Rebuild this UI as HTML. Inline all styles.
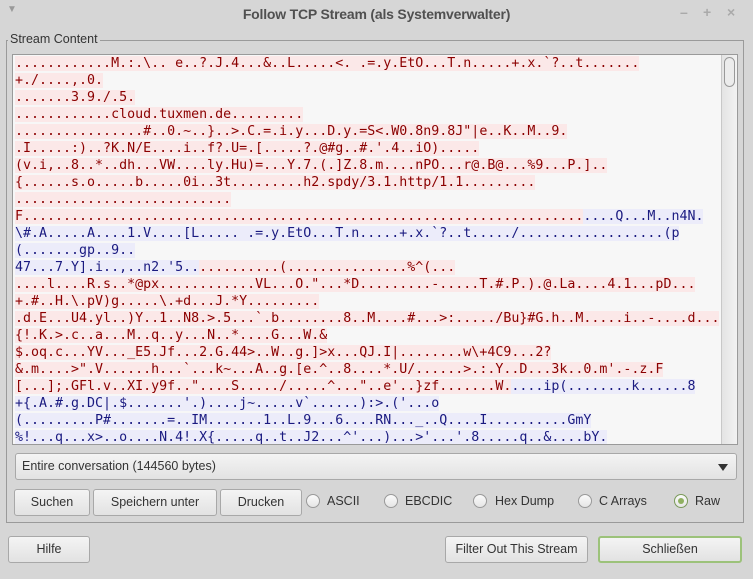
<!DOCTYPE html>
<html><head><meta charset="utf-8">
<style>
*{box-sizing:border-box;margin:0;padding:0}
body{width:753px;height:579px;overflow:hidden;background:#d6d6d6;font-family:"Liberation Sans",sans-serif;font-size:12.5px;color:#333;position:relative}
.title{position:absolute;left:0;top:0;width:753px;height:28px;text-align:center;line-height:28px;font-size:14px;font-weight:bold;color:#505050;letter-spacing:-0.2px}
.tl{position:absolute;left:7px;top:4px;color:#999;font-size:10px}
.tr{position:absolute;top:4px;color:#aaa;font-size:14px;font-weight:bold}
.frame{position:absolute;left:6px;top:40px;width:738px;height:483px;border:1px solid #9a9a9a}
.flabel{position:absolute;left:8px;top:32px;background:#d6d6d6;padding:0 2px;font-size:12.5px;color:#333}
.tbox{position:absolute;left:12px;top:54px;width:726px;height:391px;border:1px solid #9a9a9a;background:#f7f7f7;overflow:hidden}
.txt{position:absolute;left:2px;top:0px;font-family:"DejaVu Sans Mono",monospace;font-size:13.3px;line-height:17px;white-space:pre}
.c{color:#8b0000;background:#fbe8e8}
.s{color:#1a1a80;background:#ececfa}
.sb{position:absolute;right:0;top:0;width:16px;height:389px;background:linear-gradient(90deg,#e4e4e4,#f2f2f2);border-left:1px solid #c8c8c8}
.thumb{position:absolute;left:2px;top:2px;width:11px;height:30px;border:1px solid #999;border-radius:6px;background:#ececec}
.btn{position:absolute;height:27px;border:1px solid #a8a8a8;border-radius:3px;background:linear-gradient(#f4f4f4,#e2e2e2);text-align:center;line-height:25px;font-size:12.5px;color:#333}
.combo{position:absolute;left:15px;top:453px;width:722px;height:27px;border:1px solid #a8a8a8;border-radius:3px;background:linear-gradient(#f4f4f4,#e2e2e2);line-height:25px;padding-left:6px}
.arrow{position:absolute;right:8px;top:10px;width:0;height:0;border-left:5px solid transparent;border-right:5px solid transparent;border-top:7px solid #333}
.rad{position:absolute;top:494px;width:14px;height:14px;border:1px solid #999;border-radius:50%;background:linear-gradient(#fafafa,#e6e6e6)}
.rl{position:absolute;top:494px;line-height:15px;font-size:12.5px}
</style></head><body>
<div class="title">Follow TCP Stream (als Systemverwalter)</div>
<div class="tl">▼</div>
<div class="tr" style="left:680px">–</div><div class="tr" style="left:703px">+</div><div class="tr" style="left:727px">×</div>
<div class="frame"></div>
<div class="flabel">Stream Content</div>
<div class="tbox">
<div class="txt"><span class="c">............M.:.\.. e..?.J.4...&amp;..L.....&lt;. .=.y.EtO...T.n.....+.x.`?..t.......</span>
<span class="c">+./....,.0.</span>
<span class="c">.......3.9./.5.</span>
<span class="c">............cloud.tuxmen.de.........</span>
<span class="c">................#..0.~..}..&gt;.C.=.i.y...D.y.=S&lt;.W0.8n9.8J"|e..K..M..9.</span>
<span class="c">.I.....:)..?K.N/E....i..f?.U=.[.....?.@#g..#.'.4..iO).....</span>
<span class="c">(v.i,..8..*..dh...VW....ly.Hu)=...Y.7.(.]Z.8.m....nPO...r@.B@...%9...P.]..</span>
<span class="c">{......s.o.....b.....0i..3t.........h2.spdy/3.1.http/1.1.........</span>
<span class="c">...........................</span>
<span class="c">F......................................................................</span><span class="s">....Q...M..n4N.</span>
<span class="s">\#.A.....A....1.V....[L..... .=.y.EtO...T.n.....+.x.`?..t...../..................(p</span>
<span class="s">(.......gp..9..</span>
<span class="s">47...7.Y].i..,..n2.'5..</span><span class="c">..........(...............%^(...</span>
<span class="c">....l....R.s..*@px............VL...O."...*D.........-.....T.#.P.).@.La....4.1...pD...</span>
<span class="c">+.#..H.\.pV)g.....\.+d...J.*Y.........</span>
<span class="c">.d.E...U4.yl..)Y..1..N8.&gt;.5...`.b........8..M....#...&gt;:...../Bu}#G.h..M.....i..-....d...</span>
<span class="c">{!.K.&gt;.c..a...M..q..y...N..*....G...W.&amp;</span>
<span class="c">$.oq.c...YV..._E5.Jf...2.G.44&gt;..W..g.]&gt;x...QJ.I|........w\+4C9...2?</span>
<span class="c">&amp;.m....&gt;".V......h...`...k~...A..g.[e.^..8....*.U/......&gt;.:.Y..D...3k..0.m'.-.z.F</span>
<span class="c">[...];.GFl.v..XI.y9f.."....S...../.....^..."..e'..}zf.......W.</span><span class="s">....ip(........k......8</span>
<span class="s">+{.A.#.g.DC|.$.......'.)....j~.....v`......):&gt;.('...o</span>
<span class="s">(.........P#.......=..IM.......1..L.9...6....RN..._..Q....I..........GmY</span>
<span class="s">%!...q...x&gt;..o....N.4!.X{.....q..t..J2...^'...)...&gt;'...'.8.....q..&amp;....bY.</span></div>
<div class="sb"><div class="thumb"></div></div>
</div>
<div class="combo">Entire conversation (144560 bytes)<div class="arrow"></div></div>
<div class="btn" style="left:14px;top:489px;width:76px">Suchen</div>
<div class="btn" style="left:93px;top:489px;width:124px">Speichern unter</div>
<div class="btn" style="left:220px;top:489px;width:82px">Drucken</div>
<div class="rad" style="left:306px"></div><div class="rl" style="left:327px">ASCII</div>
<div class="rad" style="left:384px"></div><div class="rl" style="left:405px">EBCDIC</div>
<div class="rad" style="left:473px"></div><div class="rl" style="left:495px">Hex Dump</div>
<div class="rad" style="left:578px"></div><div class="rl" style="left:599px">C Arrays</div>
<div class="rad" style="left:674px;border-color:#7a9a5a"><div style="position:absolute;left:3px;top:3px;width:6px;height:6px;border-radius:50%;background:#8fb060"></div></div><div class="rl" style="left:695px">Raw</div>
<div class="btn" style="left:8px;top:536px;width:82px">Hilfe</div>
<div class="btn" style="left:445px;top:536px;width:143px">Filter Out This Stream</div>
<div class="btn" style="left:598px;top:536px;width:144px;border:2px solid #9cc27a;line-height:23px">Schließen</div>
</body></html>
